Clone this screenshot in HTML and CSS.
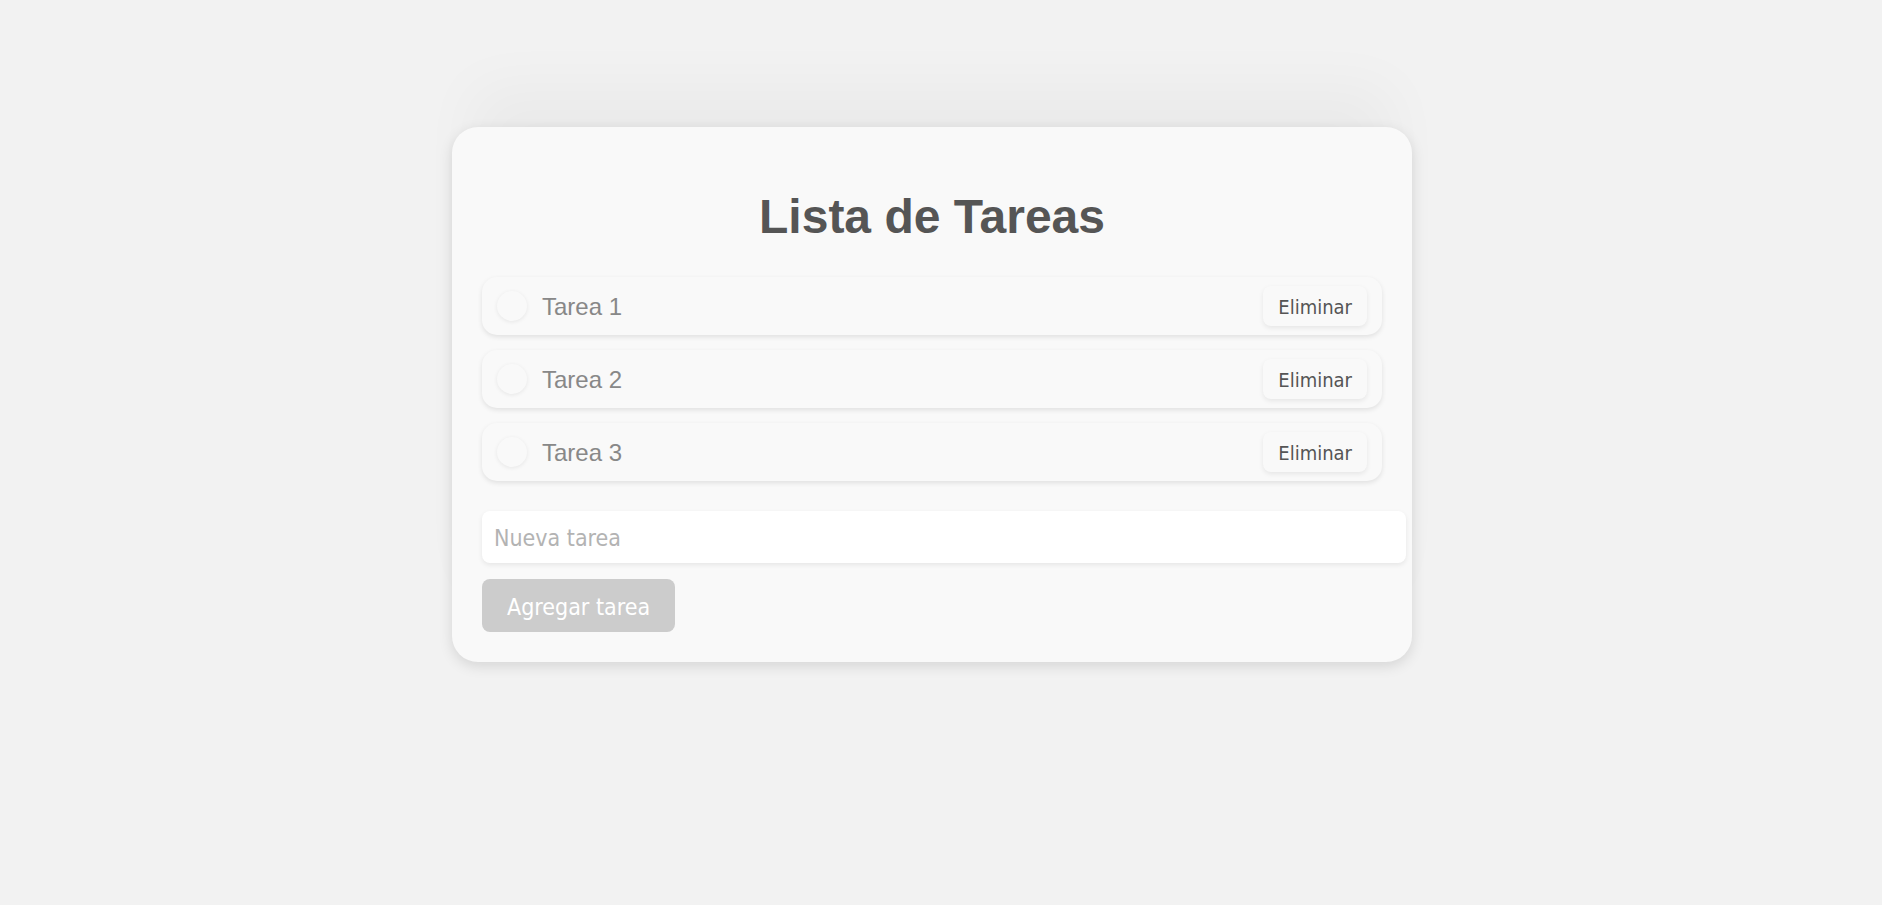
FILE: index.html
```html
<!DOCTYPE html>
<html lang="es">
<head>
<meta charset="utf-8">
<title>Lista de Tareas</title>
<link rel="stylesheet" href="styles.css">
</head>
<body>
<div class="page">
  <div class="card">
    <h1 class="title">Lista de Tareas</h1>
    <ul class="tasks">
      <li class="task">
        <span class="check"></span>
        <span class="label">Tarea 1</span>
        <button class="delete">Eliminar</button>
      </li>
      <li class="task">
        <span class="check"></span>
        <span class="label">Tarea 2</span>
        <button class="delete">Eliminar</button>
      </li>
      <li class="task">
        <span class="check"></span>
        <span class="label">Tarea 3</span>
        <button class="delete">Eliminar</button>
      </li>
    </ul>
    <input class="new-task" type="text" placeholder="Nueva tarea">
    <button class="add">Agregar tarea</button>
  </div>
</div>
</body>
</html>
```

FILE: styles.css
```css
html, body {
  margin: 0;
  padding: 0;
  background: #f2f2f2;
}

body {
  font-family: "Liberation Sans", Arial, sans-serif;
  min-height: 905px;
}

.page {
  display: flex;
  justify-content: center;
  padding: 127px 18px 0 0;
}

.card {
  width: 900px;
  padding: 30px;
  background: #f9f9f9;
  border-radius: 26px;
  box-shadow: 0 4px 14px rgba(0, 0, 0, 0.12),
              0 -60px 60px -20px rgba(0, 0, 0, 0.035);
}

.title {
  margin: 32px 0 32px;
  font-size: 48px;
  line-height: 56px;
  font-weight: bold;
  text-align: center;
  color: #555555;
}

.tasks {
  list-style: none;
  margin: 0 0 30px;
  padding: 0;
  display: flex;
  flex-direction: column;
  gap: 15px;
}

.task {
  display: flex;
  align-items: center;
  padding: 9px 15px;
  background: #f9f9f9;
  border-radius: 15px;
  box-shadow: 0 2px 5px rgba(0, 0, 0, 0.1);
}

.check {
  width: 30px;
  height: 30px;
  border-radius: 50%;
  background: #f9f9f9;
  box-shadow: 0 1px 4px rgba(0, 0, 0, 0.08);
  flex: none;
}

.label {
  flex: 1;
  margin-left: 15px;
  font-size: 24px;
  line-height: 30px;
  padding-top: 2px;
  color: #888888;
}

.delete {
  font-family: "DejaVu Sans", sans-serif;
  font-stretch: condensed;
  font-size: 20px;
  line-height: 26px;
  padding: 8px 15px 6px;
  border: none;
  border-radius: 8px;
  background: #f9f9f9;
  color: #555555;
  box-shadow: 0 2px 5px rgba(0, 0, 0, 0.08);
}

.new-task {
  display: block;
  width: 100%;
  height: 28px;
  padding: 13px 12px 11px;
  margin: 0 0 16px;
  border: none;
  border-radius: 8px;
  background: #ffffff;
  font-family: "DejaVu Sans", sans-serif;
  font-stretch: condensed;
  font-size: 23px;
  line-height: 28px;
  color: #555555;
  box-shadow: 0 2px 5px rgba(0, 0, 0, 0.08);
  outline: none;
}

.new-task::placeholder {
  color: #b3b3b3;
}

.add {
  display: block;
  height: 53px;
  padding: 2px 25px 0;
  border: none;
  border-radius: 8px;
  background: #cccccc;
  color: #ffffff;
  font-family: "DejaVu Sans", sans-serif;
  font-stretch: condensed;
  font-size: 23px;
}
```
